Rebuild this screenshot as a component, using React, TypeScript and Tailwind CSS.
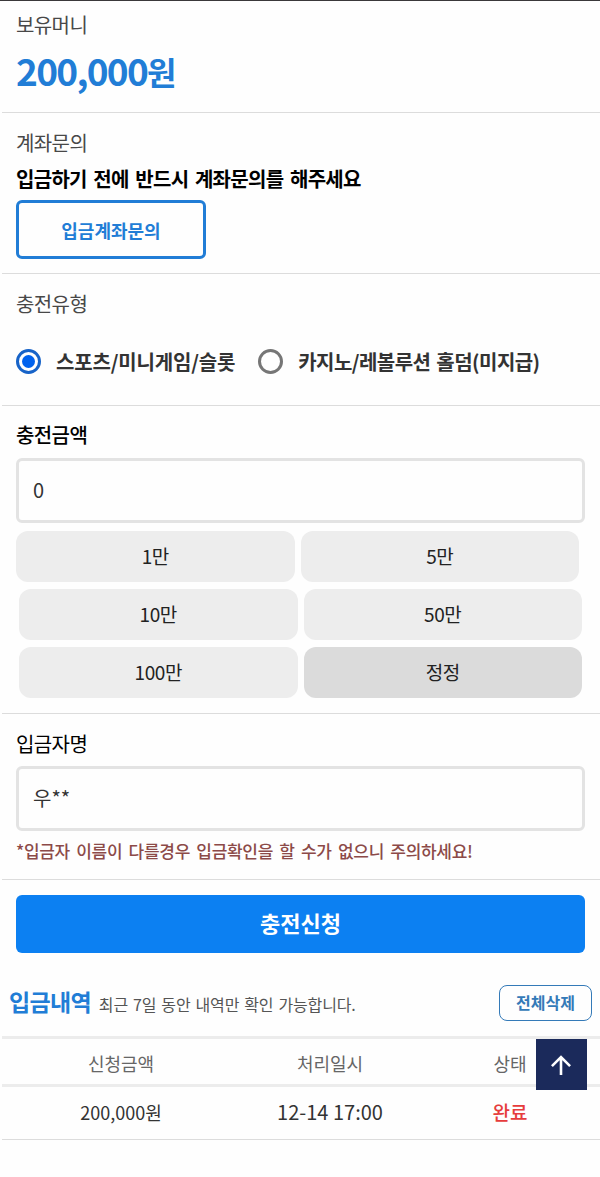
import { useState } from 'react';
import type { ReactNode } from 'react';

const chargeTypes = ['스포츠/미니게임/슬롯', '카지노/레볼루션 홀덤(미지급)'];

const history = [{ amount: '200,000원', date: '12-14 17:00', status: '완료' }];

function Label({ children, className = 'text-[#484848]' }: { children: ReactNode; className?: string }) {
  return <div className={`h-6 text-xl leading-6 tracking-[-0.6px] ${className}`}>{children}</div>;
}

function AmountButton({ label, dark, onClick }: { label: string; dark?: boolean; onClick: () => void }) {
  return (
    <button
      onClick={onClick}
      className={`flex-1 h-[51px] rounded-xl text-[19px] leading-[49px] pb-0.5 tracking-[-0.4px] text-[#222] ${
        dark ? 'bg-[#dbdbdb]' : 'bg-[#ededed]'
      }`}
    >
      {label}
    </button>
  );
}

function ArrowUp() {
  return (
    <svg width="20" height="20" viewBox="0 0 20 20" fill="none" stroke="white" strokeWidth="2.6">
      <path d="M10 20V2M0.9 11.1 10 2l9.1 9.1" />
    </svg>
  );
}

export default function App() {
  const [chargeType, setChargeType] = useState(0);
  const [amount, setAmount] = useState(0);

  const add = (value: number) => () => setAmount(amount + value);

  return (
    <div className="relative h-[1177px] w-[600px] overflow-hidden border-t border-[#3a383a] bg-[#fefefe] pl-0.5 font-['Noto_Sans_CJK_KR',sans-serif]">
      <section className="h-28 border-b border-[#dcdcdc] px-3.5 pt-3">
        <Label>보유머니</Label>
        <div className="mt-2 h-[50px] text-[37px] font-bold leading-[50px] tracking-[-1.7px] text-[#217dd6]">
          200,000<span className="align-[1px] text-[32px] leading-none">원</span>
        </div>
      </section>

      <section className="h-[161px] border-b border-[#dcdcdc] px-3.5 pt-[18px]">
        <Label>계좌문의</Label>
        <p className="mt-3 h-6 text-xl font-bold leading-6 tracking-[-0.7px] [word-spacing:2.7px] text-black">
          입금하기 전에 반드시 계좌문의를 해주세요
        </p>
        <button className="mt-[9px] h-[59px] w-[190px] rounded-md border-[3px] border-[#217dd6] text-lg font-bold text-[#217dd6]">
          입금계좌문의
        </button>
      </section>

      <section className="h-[132px] border-b border-[#dcdcdc] px-3.5 pt-[18px]">
        <Label>충전유형</Label>
        <div className="mt-[33px] flex gap-[23px]">
          {chargeTypes.map((type, i) => (
            <label key={type} className="flex items-center gap-[15px]">
              <input
                type="radio"
                name="charge"
                className="sr-only"
                checked={chargeType === i}
                onChange={() => setChargeType(i)}
              />
              <span
                className={`flex size-[25px] items-center justify-center rounded-full border-[3px] ${
                  chargeType === i ? 'border-[#1763c8]' : 'border-[#767676]'
                }`}
              >
                {chargeType === i && <span className="size-[13px] rounded-full bg-[#0062ee]" />}
              </span>
              <span
                className={`whitespace-nowrap text-xl font-bold leading-6 text-[#333] ${
                  i === 0 ? 'tracking-[-0.17px]' : 'tracking-[-0.55px] [word-spacing:2px]'
                }`}
              >
                {type}
              </span>
            </label>
          ))}
        </div>
      </section>

      <section className="h-[308px] border-b border-[#dcdcdc] pl-3.5 pt-[17px]">
        <Label className="font-medium text-black">충전금액</Label>
        <input
          readOnly
          value={amount}
          className="mt-[11px] block h-[65px] w-[569px] rounded-md border-[3px] border-[#e3e3e3] bg-transparent px-3.5 pb-[3px] text-xl text-[#333] outline-none"
        />
        <div className="mt-2 flex w-[563px] gap-1.5">
          <AmountButton label="1만" onClick={add(10000)} />
          <AmountButton label="5만" onClick={add(50000)} />
        </div>
        <div className="ml-[3px] mt-[7px] flex w-[563px] gap-1.5">
          <AmountButton label="10만" onClick={add(100000)} />
          <AmountButton label="50만" onClick={add(500000)} />
        </div>
        <div className="ml-[3px] mt-[7px] flex w-[563px] gap-1.5">
          <AmountButton label="100만" onClick={add(1000000)} />
          <AmountButton label="정정" dark onClick={() => setAmount(0)} />
        </div>
      </section>

      <section className="h-[166px] border-b border-[#dcdcdc] pl-3.5 pt-[18px]">
        <Label className="text-black">입금자명</Label>
        <input
          readOnly
          value="우**"
          className="mt-[10px] block h-[65px] w-[569px] rounded-md border-[3px] border-[#e3e3e3] bg-transparent px-3.5 pb-[3px] text-xl text-[#333] outline-none"
        />
        <p className="mt-2 h-6 whitespace-nowrap text-[17px] font-medium leading-6 tracking-[-0.3px] [word-spacing:2.8px] text-[#8c4a48]">
          *입금자 이름이 다를경우 입금확인을 할 수가 없으니 주의하세요!
        </p>
      </section>

      <button className="ml-3.5 mt-[15px] block h-[58px] w-[569px] rounded-md bg-[#0c80f2] pb-1 text-[22px] font-bold text-white">
        충전신청
      </button>

      <div className="flex h-[83px] items-center pl-[7px] pr-2 pt-[17px]">
        <h2 className="pb-[3px] text-[23px] font-bold tracking-[-0.7px] text-[#217dd6]">입금내역</h2>
        <span className="ml-2 mt-0.5 whitespace-nowrap text-base tracking-[-0.15px] [word-spacing:1.6px] text-[#555]">
          최근 7일 동안 내역만 확인 가능합니다.
        </span>
        <button className="ml-auto h-9 w-[93px] rounded-lg border border-[#347ab8] pb-[3px] text-base font-bold text-[#347ab8]">
          전체삭제
        </button>
      </div>

      <table className="w-full table-fixed border-t-[3px] border-[#ececec] text-center">
        <colgroup>
          <col className="w-[238px]" />
          <col className="w-[180px]" />
          <col />
        </colgroup>
        <thead>
          <tr className="h-12 border-b-[3px] border-[#ececec] text-lg text-[#666]">
            <th className="pt-0.5 font-normal">신청금액</th>
            <th className="pt-0.5 font-normal">처리일시</th>
            <th className="pt-0.5 font-normal">상태</th>
          </tr>
        </thead>
        <tbody>
          {history.map((row) => (
            <tr key={row.date} className="h-[54px] border-b border-[#dcdcdc] text-[#333]">
              <td className="pb-[3px] text-lg">{row.amount}</td>
              <td className="pb-[3px] text-xl">{row.date}</td>
              <td className="pb-px text-[19px] font-medium text-[#e63c3c]">{row.status}</td>
            </tr>
          ))}
        </tbody>
      </table>

      <button className="absolute left-[536px] top-[1038px] flex size-[51px] items-center justify-center bg-[#1b2a5b] pr-px">
        <ArrowUp />
      </button>
    </div>
  );
}
